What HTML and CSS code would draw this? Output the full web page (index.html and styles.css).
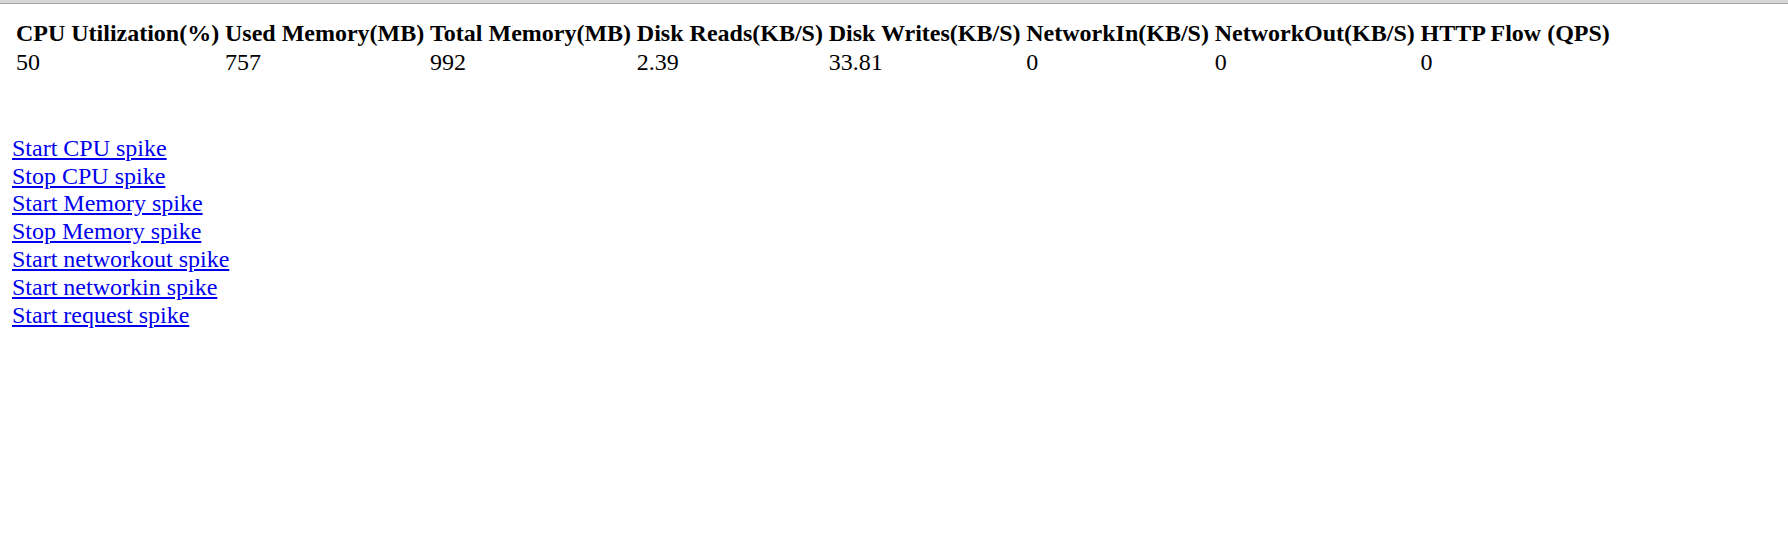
FILE: index.html
```html
<!DOCTYPE html>
<html>
<head>
<meta charset="utf-8">
<title>Stats</title>
<link rel="stylesheet" href="styles.css">
</head>
<body>
<div class="topbar"></div>
<div class="page">
  <table class="stats">
    <tr>
      <th>CPU Utilization(%)</th>
      <th>Used Memory(MB)</th>
      <th>Total Memory(MB)</th>
      <th>Disk Reads(KB/S)</th>
      <th>Disk Writes(KB/S)</th>
      <th>NetworkIn(KB/S)</th>
      <th>NetworkOut(KB/S)</th>
      <th>HTTP Flow (QPS)</th>
    </tr>
    <tr>
      <td>50</td>
      <td>757</td>
      <td>992</td>
      <td>2.39</td>
      <td>33.81</td>
      <td>0</td>
      <td>0</td>
      <td>0</td>
    </tr>
  </table>
  <div class="actions">
    <a href="#">Start CPU spike</a>
    <a href="#">Stop CPU spike</a>
    <a href="#">Start Memory spike</a>
    <a href="#">Stop Memory spike</a>
    <a href="#">Start networkout spike</a>
    <a href="#">Start networkin spike</a>
    <a href="#">Start request spike</a>
  </div>
</div>
</body>
</html>
```

FILE: styles.css
```css
html, body {
  margin: 0;
  padding: 0;
  background: #ffffff;
}

body {
  font-family: "Liberation Serif", "Times New Roman", serif;
  font-size: 24px;
  line-height: 27.9px;
  color: #000000;
}

.topbar {
  height: 3px;
  background: #d6d6d6;
  border-bottom: 1px solid #a3a3a3;
}

.page {
  padding: 14px 12px 0 13px;
}

.stats {
  border-collapse: separate;
  border-spacing: 0;
}

.stats th,
.stats td {
  padding: 0.5px 2.9px;
  text-align: left;
  font-size: 24px;
  line-height: 28.3px;
}

.stats th {
  font-weight: bold;
}

.actions {
  margin-top: 58px;
  margin-left: -1px;
  display: flex;
  flex-direction: column;
  align-items: flex-start;
}

.actions a {
  color: #0000ee;
  text-decoration: underline;
  line-height: 27.9px;
}
```
